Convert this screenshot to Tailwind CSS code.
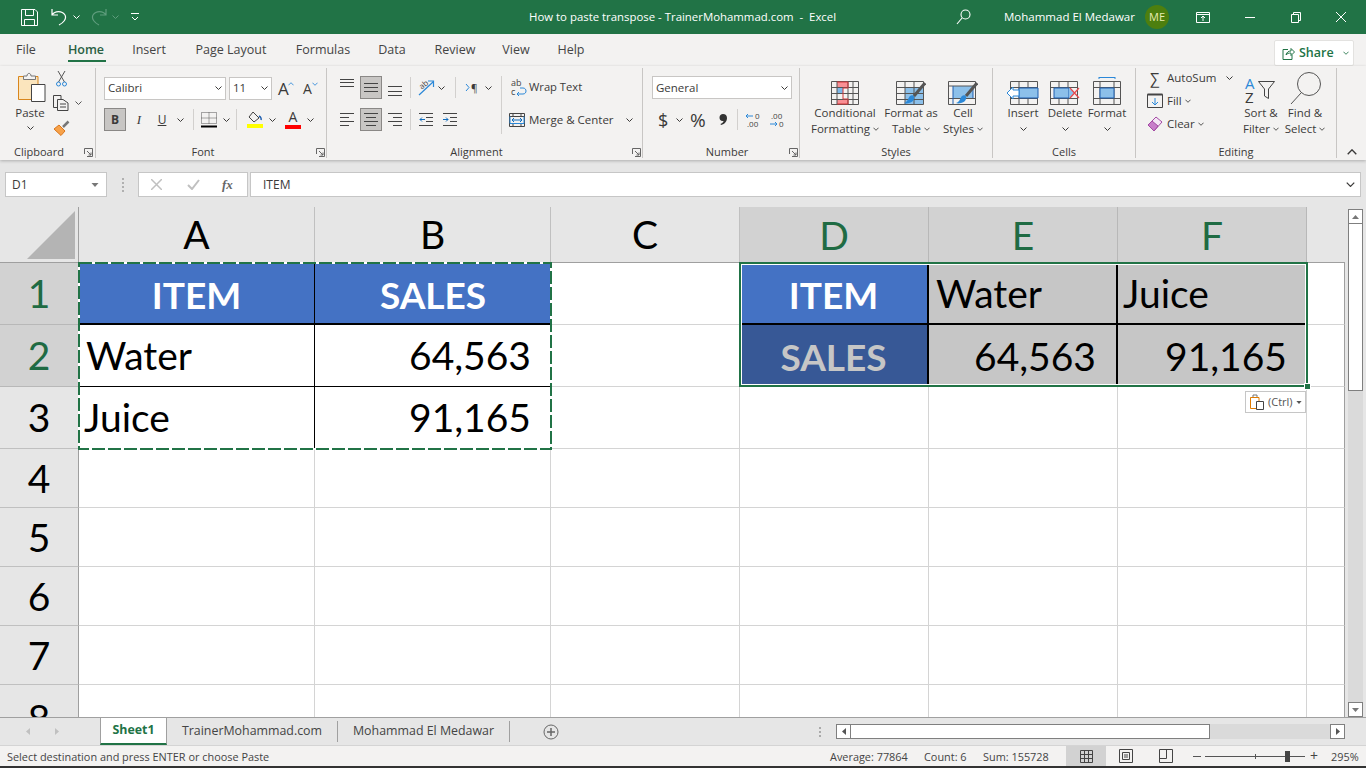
<!DOCTYPE html>
<html lang="en">
<head>
  <meta charset="UTF-8" />
  <title>How to paste transpose - TrainerMohammad.com - Excel</title>
  <script src="https://cdn.jsdelivr.net/npm/@tailwindcss/browser@4"></script>
</head>
<body class="w-[1366px] h-[768px] overflow-hidden bg-[#e6e6e6] text-[11.5px] text-[#3b3a39] [font-family:'Open_Sans',sans-serif]">
  <svg class="hidden">
    <symbol id="chev" viewBox="0 0 7 4"><path d="M.5.5 3.5 3.5 6.5.5" fill="none" stroke="currentColor"/></symbol>
    <symbol id="launcher" viewBox="0 0 9 9"><path d="M.5 6V.5H8.5V8.5H3M3 3 7 7M7 4.5V7H4.5" fill="none" stroke="#666"/></symbol>
    <symbol id="caret" viewBox="0 0 7 4"><path d="M0 0H7L3.5 4Z" fill="currentColor"/></symbol>
  </svg>

  <!-- Title bar -->
  <div class="flex items-center h-[34px] bg-[#217346] text-white">
    <svg class="ml-[21px] w-[17px] h-[17px]" viewBox="0 0 17 17" fill="none" stroke="#fff"><path d="M.5.5H14L16.5 3V16.5H.5ZM4.5.5V6.5H12.5V.5M3.5 16.5V10.5H13.5V16.5"/></svg>
    <svg class="ml-[13px] w-[16px] h-[18px]" viewBox="0 0 16 18" fill="none" stroke="#fff" stroke-width="1.2"><path d="M1 1V7H7M1 7C4 2.500 11 2.500 14 7 16 11 12 15 8 17"/></svg>
    <svg class="ml-[6px] w-[7px] h-[4px]"><use href="#chev"/></svg>
    <svg class="ml-[11px] w-[16px] h-[18px]" viewBox="0 0 16 18" fill="none" stroke="#5f9d7d" stroke-width="1.2"><path d="M15 1V7H9M15 7C12 2.500 5 2.500 2 7 0 11 4 15 8 17"/></svg>
    <svg class="ml-[5px] w-[7px] h-[4px] text-[#5f9d7d]"><use href="#chev"/></svg>
    <svg class="ml-[12px] w-[8px] h-[8px]" viewBox="0 0 8 8" fill="none" stroke="#fff"><path d="M0 .5H8M1 4 4 7 7 4"/></svg>
    <div class="ml-[390px] w-[307px] text-center whitespace-nowrap text-[11.4px]">How to paste transpose - TrainerMohammad.com &nbsp;-&nbsp; Excel</div>
    <svg class="ml-[120px] w-[15px] h-[16px]" viewBox="0 0 15 16" fill="none" stroke="#fff" stroke-width="1.1"><circle cx="9.500" cy="5.500" r="4.500"/><path d="M6 9 1 15"/></svg>
    <div class="ml-[33px] w-[132px] whitespace-nowrap text-[11.5px]">Mohammad El Medawar</div>
    <div class="ml-[9px] w-[24px] h-[24px] rounded-full bg-[#4d7f0f] flex items-center justify-center text-[11px] text-[#e8ecb0]">ME</div>
    <svg class="ml-[27px] w-[14px] h-[11px]" viewBox="0 0 14 11" fill="none" stroke="#fff"><path d="M.5.5H13.500V10.500H.5ZM.5 2.500H13.500M7 9V4.500M5 6 7 4 9 6"/></svg>
    <div class="ml-[35px] w-[10px] h-px bg-white"></div>
    <svg class="ml-[36px] w-[10px] h-[11px]" viewBox="0 0 10 11" fill="none" stroke="#fff"><path d="M.5 2.500H7.500V10.500H.5ZM2.500 2.500V.5H9.500V8.500H7.500"/></svg>
    <svg class="ml-[35px] w-[10px] h-[10px]" viewBox="0 0 10 10" fill="none" stroke="#fff"><path d="M0 0 10 10M10 0 0 10"/></svg>
  </div>

  <!-- Ribbon tabs -->
  <div class="flex h-[32px] bg-[#f3f2f1] text-[12.5px] text-[#444]">
    <div class="w-[52px] flex items-center justify-center">File</div>
    <div class="relative w-[68px] flex items-center justify-center font-semibold text-[#2a5f43]">Home<div class="absolute left-[16px] top-[26px] w-[38px] h-[2px] bg-[#217346]"></div></div>
    <div class="w-[58px] flex items-center justify-center">Insert</div>
    <div class="w-[106px] flex items-center justify-center">Page Layout</div>
    <div class="w-[78px] flex items-center justify-center">Formulas</div>
    <div class="w-[60px] flex items-center justify-center">Data</div>
    <div class="w-[66px] flex items-center justify-center">Review</div>
    <div class="w-[56px] flex items-center justify-center">View</div>
    <div class="w-[54px] flex items-center justify-center">Help</div>
    <div class="ml-[676px] mt-[6px] w-[80px] h-[26px] bg-white rounded-[2px] border border-[#e3e2e0] flex items-center text-[#217346] font-semibold">
      <svg class="ml-[7px] w-[13px] h-[13px]" viewBox="0 0 13 13" fill="none" stroke="#217346"><path d="M6 2.500H1V12.500H10V8M4 8C4.500 5 7 4 9 4V1.500L12.500 5 9 8.500V6C7 6 5 6.500 4 8Z"/></svg>
      <span class="ml-[4px]">Share</span>
      <svg class="ml-[9px] w-[6px] h-[4px]"><use href="#chev"/></svg>
    </div>
  </div>

  <!-- Ribbon -->
  <div class="relative z-10 flex h-[94px] pt-[2px] bg-[#f3f2f1] shadow-[0_1px_3px_rgba(0,0,0,0.25)]">

    <!-- Clipboard -->
    <div class="relative flex flex-col w-[96px] h-[90px] border-r border-[#c8c6c4]">
      <div class="flex h-[77px] pl-[14px]">
        <div class="flex flex-col items-center w-[32px]">
          <svg class="mt-[4px] ml-[3px] w-[28px] h-[30px] shrink-0" viewBox="0 0 28 30" fill="none"><path d="M.5 4.500H20V27.500H.5Z" fill="#fbe5bd" stroke="#d9861c"/><path d="M5.500 7.500V4H9C9 .5 13 .5 13 4H17.500V7.500Z" fill="#f3f2f1" stroke="#777"/><path d="M13.500 12.500H27V29.500H13.500Z" fill="#fff" stroke="#444"/></svg>
          <div class="mt-[3px] h-[16px] leading-[16px]">Paste</div>
          <svg class="mt-[5px] w-[7px] h-[4px]"><use href="#chev"/></svg>
        </div>
        <div class="flex flex-col ml-[7px]">
          <svg class="mt-[3px] ml-[3px] w-[11px] h-[16px]" viewBox="0 0 11 16" fill="none"><path d="M2 0 8.500 11M9 0 2.500 11" stroke="#555"/><circle cx="2.500" cy="13" r="2" stroke="#2b88d8"/><circle cx="8.500" cy="13" r="2" stroke="#2b88d8"/></svg>
          <div class="flex items-center mt-[8px]">
            <svg class="w-[16px] h-[16px]" viewBox="0 0 16 16" fill="none" stroke="#444"><path d="M4 12.500H.5V.5H8V4"/><path d="M4.500 4.500H10L15 8V15.500H4.500ZM7 9H13M7 12H13"/></svg>
            <svg class="ml-[6px] w-[7px] h-[4px] text-[#555]"><use href="#chev"/></svg>
          </div>
          <svg class="mt-[9px] w-[17px] h-[16px]" viewBox="0 0 17 16" fill="none"><path d="M10 7 15.500 1.500" stroke="#777" stroke-width="2.500"/><path d="M6 5 12 11 8 15.500 1 9Z" fill="#f7a24a" stroke="#d9761c"/></svg>
        </div>
      </div>
      <div class="h-[13px] leading-[13px] text-[11px] pl-[14px]">Clipboard</div>
      <svg class="absolute left-[84px] top-[80px] w-[9px] h-[9px]"><use href="#launcher"/></svg>
    </div>

    <!-- Font -->
    <div class="relative flex flex-col w-[231px] h-[90px] border-r border-[#c8c6c4]">
      <div class="h-[77px] pl-[8px] pt-[9px]">
        <div class="flex items-center h-[23px]">
          <div class="flex items-center justify-between w-[122px] h-[23px] px-[3px] pb-[1px] bg-white border border-[#c8c6c4] text-[11.5px]">Calibri<svg class="w-[7px] h-[4px]"><use href="#chev"/></svg></div>
          <div class="flex items-center justify-between ml-[3px] w-[43px] h-[23px] px-[3px] pb-[1px] bg-white border border-[#c8c6c4]">11<svg class="w-[7px] h-[4px]"><use href="#chev"/></svg></div>
          <div class="relative ml-[6px] w-[16px] text-[17px] leading-[20px]">A<svg class="absolute left-[10px] top-[3px] w-[6px] h-[4px] rotate-180 text-[#2b88d8]"><use href="#chev"/></svg></div>
          <div class="relative ml-[9px] w-[14px] text-[14px] leading-[20px]">A<svg class="absolute left-[9px] top-[3px] w-[6px] h-[4px] text-[#2b88d8]"><use href="#chev"/></svg></div>
        </div>
        <div class="flex items-center h-[23px] mt-[8px]">
          <div class="flex items-center justify-center w-[22px] h-[23px] bg-[#c8c6c4] border border-[#8a8886] font-bold text-[12px]">B</div>
          <div class="flex items-center justify-center ml-[2px] w-[22px] h-[23px] italic text-[13px] [font-family:'Liberation_Serif',serif]">I</div>
          <div class="flex items-center justify-center ml-[1px] w-[22px] h-[23px] underline text-[12px]">U</div>
          <svg class="ml-[4px] w-[7px] h-[4px]"><use href="#chev"/></svg>
          <div class="ml-[9px] w-px h-[21px] bg-[#d2d0ce]"></div>
          <svg class="ml-[7px] w-[16px] h-[16px]" viewBox="0 0 16 16" fill="none"><path d="M.5.5H15.500V11.500H.5ZM8 .5V11.500M.5 6H15.500" stroke="#555" stroke-dasharray="1 1"/><path d="M0 14.500H16" stroke="#000" stroke-width="2"/></svg>
          <svg class="ml-[6px] w-[7px] h-[4px]"><use href="#chev"/></svg>
          <div class="ml-[6px] w-px h-[21px] bg-[#d2d0ce]"></div>
          <svg class="ml-[10px] w-[16px] h-[17px]" viewBox="0 0 16 17" fill="none"><path d="M6 1 12 7 7 11 2 6Z" stroke="#444"/><path d="M12 5C14 6 14.500 8 14 9" stroke="#1f5fb0" stroke-width="1.500"/><path d="M0 15H16" stroke="#ffff00" stroke-width="4"/></svg>
          <svg class="ml-[6px] w-[7px] h-[4px]"><use href="#chev"/></svg>
          <div class="ml-[9px] w-[16px] flex flex-col items-center"><span class="text-[14px] leading-[14px]">A</span><span class="mt-[1px] w-[16px] h-[4px] bg-[#ff0000]"></span></div>
          <svg class="ml-[6px] w-[7px] h-[4px]"><use href="#chev"/></svg>
        </div>
      </div>
      <div class="h-[13px] leading-[13px] text-[11px] text-center pr-[16px]">Font</div>
      <svg class="absolute left-[220px] top-[80px] w-[9px] h-[9px]"><use href="#launcher"/></svg>
    </div>

    <!-- Alignment -->
    <div class="relative flex flex-col w-[316px] h-[90px] border-r border-[#c8c6c4]">
      <div class="flex h-[77px] pt-[8px]">
        <div class="w-[174px]">
          <div class="flex items-center h-[23px]">
            <svg class="ml-[13px] w-[14px] h-[23px]" viewBox="0 0 14 23" stroke="#444"><path d="M0 3.500H14M0 6.500H14M0 10.500H14" /></svg>
            <div class="flex items-center justify-center ml-[6px] w-[22px] h-[23px] bg-[#c8c6c4] border border-[#8a8886]"><svg class="w-[14px] h-[11px]" viewBox="0 0 14 11" stroke="#444"><path d="M0 1.500H14M0 5.500H14M0 9.500H14"/></svg></div>
            <svg class="ml-[6px] w-[14px] h-[23px]" viewBox="0 0 14 23" stroke="#444"><path d="M0 10.500H14M0 15.500H14M0 19.500H14"/></svg>
            <div class="ml-[8px] w-px h-[21px] bg-[#d2d0ce]"></div>
            <svg class="ml-[7px] w-[16px] h-[18px] overflow-visible" viewBox="0 0 16 18" fill="none"><path d="M1 16 15 3M10 2H15.500V8" stroke="#2b88d8" stroke-width="1.200"/><text x="1" y="9" font-size="8" fill="#444" transform="rotate(-40 5 6)">ab</text></svg>
            <svg class="ml-[4px] w-[7px] h-[4px]"><use href="#chev"/></svg>
            <div class="ml-[10px] w-px h-[21px] bg-[#d2d0ce]"></div>
            <svg class="ml-[9px] w-[5px] h-[7px]" viewBox="0 0 5 7" fill="none" stroke="#2b88d8"><path d="M1 0 4 3.500 1 7"/></svg>
            <span class="ml-[1px] w-[8px] text-[10px] leading-[14px]">¶</span>
            <svg class="ml-[6px] w-[7px] h-[4px]"><use href="#chev"/></svg>
          </div>
          <div class="flex items-center h-[23px] mt-[9px]">
            <svg class="ml-[13px] w-[14px] h-[15px]" viewBox="0 0 14 15" stroke="#444"><path d="M0 1.500H14M0 5.500H9M0 9.500H14M0 13.500H9"/></svg>
            <div class="flex items-center justify-center ml-[6px] w-[22px] h-[23px] bg-[#c8c6c4] border border-[#8a8886]"><svg class="w-[14px] h-[15px]" viewBox="0 0 14 15" stroke="#444"><path d="M0 1.500H14M2 5.500H12M0 9.500H14M2 13.500H12"/></svg></div>
            <svg class="ml-[6px] w-[14px] h-[15px]" viewBox="0 0 14 15" stroke="#444"><path d="M0 1.500H14M5 5.500H14M0 9.500H14M5 13.500H14"/></svg>
            <div class="ml-[8px] w-px h-[21px] bg-[#d2d0ce]"></div>
            <svg class="ml-[8px] w-[14px] h-[13px]" viewBox="0 0 14 13" fill="none"><path d="M0 .5H14M7 4.500H14M7 8.500H14M0 12.500H14" stroke="#444"/><path d="M6 6.500H1M3 4.500 1 6.500 3 8.500" stroke="#0f6cbd"/></svg>
            <svg class="ml-[10px] w-[14px] h-[13px]" viewBox="0 0 14 13" fill="none"><path d="M0 .5H14M7 4.500H14M7 8.500H14M0 12.500H14" stroke="#444"/><path d="M0 6.500H5M3 4.500 5 6.500 3 8.500" stroke="#0f6cbd"/></svg>
          </div>
        </div>
        <div class="w-[141px] h-[58px] border-l border-[#d2d0ce]">
          <div class="flex items-center h-[23px] mt-[0px]">
            <svg class="ml-[9px] w-[16px] h-[20px] overflow-visible" viewBox="0 0 16 20" fill="none"><text x="0" y="8" font-size="9" fill="#444">ab</text><text x="0" y="17" font-size="9" fill="#444">c</text><path d="M6 16H12C16 16 16 10 12 10H9M8 14 6 16 8 18" stroke="#2b88d8"/></svg>
            <span class="ml-[2px] whitespace-nowrap text-[11.2px]">Wrap Text</span>
          </div>
          <div class="flex items-center h-[23px] mt-[9px]">
            <svg class="ml-[7px] w-[16px] h-[14px]" viewBox="0 0 16 14" fill="none"><path d="M.5.5H15.500V13.500H.5ZM.5 3.500H15.500M.5 10.500H15.500M4 .5V3M12 .5V3M4 11V13.500M12 11V13.500" stroke="#444"/><path d="M1 3.500V10.500H15V3.500" stroke="#2b88d8"/><path d="M3 7H13M5 5 3 7 5 9M11 5 13 7 11 9" stroke="#0f6cbd"/></svg>
            <span class="ml-[4px] whitespace-nowrap">Merge &amp; Center</span>
            <svg class="ml-[12px] w-[7px] h-[4px]"><use href="#chev"/></svg>
          </div>
        </div>
      </div>
      <div class="h-[13px] leading-[13px] text-[11px] text-center pr-[16px]">Alignment</div>
      <svg class="absolute left-[305px] top-[80px] w-[9px] h-[9px]"><use href="#launcher"/></svg>
    </div>

    <!-- Number -->
    <div class="relative flex flex-col w-[157px] h-[90px] border-r border-[#c8c6c4]">
      <div class="h-[77px] pl-[9px] pt-[8px]">
        <div class="flex items-center justify-between w-[140px] h-[23px] px-[3px] bg-white border border-[#c8c6c4]">General<svg class="w-[7px] h-[4px]"><use href="#chev"/></svg></div>
        <div class="flex items-center h-[23px] mt-[9px]">
          <span class="ml-[6px] w-[10px] text-[18px] leading-[20px]">$</span>
          <svg class="ml-[8px] w-[7px] h-[4px]"><use href="#chev"/></svg>
          <span class="ml-[7px] w-[17px] text-[19px] leading-[20px] whitespace-nowrap">%</span>
          <svg class="ml-[12px] w-[8px] h-[11px]" viewBox="0 0 8 11" fill="#333"><path d="M4 0C6.500 0 8 1.500 8 4 8 7 6 10 2 11L1.500 10C3.500 9 4.500 8 4.500 7 2 7.500 .5 6 .5 3.500.5 1.500 2 0 4 0Z"/></svg>
          <div class="ml-[10px] w-px h-[21px] bg-[#d2d0ce]"></div>
          <svg class="ml-[7px] w-[16px] h-[16px] overflow-visible" viewBox="0 0 16 16" fill="none"><path d="M8 4H1M3 2 1 4 3 6" stroke="#2b88d8"/><text x="10" y="7" font-size="8" fill="#444">0</text><text x="2" y="15" font-size="8" fill="#444">.00</text></svg>
          <svg class="ml-[8px] w-[16px] h-[16px] overflow-visible" viewBox="0 0 16 16" fill="none"><text x="2" y="7" font-size="8" fill="#444">.00</text><path d="M1 12H8M6 10 8 12 6 14" stroke="#2b88d8"/><text x="10" y="15" font-size="8" fill="#444">0</text></svg>
        </div>
      </div>
      <div class="h-[13px] leading-[13px] text-[11px] text-center pl-[12px]">Number</div>
      <svg class="absolute left-[146px] top-[80px] w-[9px] h-[9px]"><use href="#launcher"/></svg>
    </div>

    <!-- Styles -->
    <div class="flex flex-col w-[193px] h-[90px] border-r border-[#c8c6c4]">
      <div class="flex h-[77px] pl-[8px] pt-[13px]">
        <div class="flex flex-col items-center w-[74px]">
          <svg class="w-[28px] h-[24px]" viewBox="0 0 28 24" fill="none"><path d="M6 1H17V7H6ZM6 18H17V23H6Z" fill="#f98f94"/><path d="M6 7H12V12H6Z" fill="#7db8e8"/><path d="M.5.5H27.500V23.500H.5ZM.5 6.500H27.500M.5 12.500H27.500M.5 18.500H27.500M6 .5V23.500M17 .5V23.500M22 .5V23.500" stroke="#555"/><path d="M6 1H17V7H12V18H17V23H6" stroke="#d13438"/></svg>
          <div class="h-[16px] leading-[16px]">Conditional</div>
          <div class="flex items-center h-[16px] leading-[16px]">Formatting<svg class="ml-[3px] w-[6px] h-[4px]"><use href="#chev"/></svg></div>
        </div>
        <div class="flex flex-col items-center w-[58px]">
          <svg class="w-[30px] h-[24px]" viewBox="0 0 30 24" fill="none"><path d="M9 7H27V23H9Z" fill="#8cc0ea"/><path d="M.5.5H27.500V23.500H.5ZM.5 6.500H27.500M.5 12.500H27.500M.5 18.500H27.500M9 .5V23.500M18 .5V23.500" stroke="#555"/><path d="M29 2 18 15" stroke="#555" stroke-width="3"/><path d="M14 15C17 13 20 16 17 20 15 22 10 23 8 22 12 21 12 17 14 15Z" fill="#2b88d8"/></svg>
          <div class="h-[16px] leading-[16px]">Format as</div>
          <div class="flex items-center h-[16px] leading-[16px]">Table<svg class="ml-[3px] w-[6px] h-[4px]"><use href="#chev"/></svg></div>
        </div>
        <div class="flex flex-col items-center w-[46px]">
          <svg class="w-[30px] h-[24px]" viewBox="0 0 30 24" fill="none"><path d="M5 5H25V17H5Z" fill="#8cc0ea"/><path d="M.5.5H27.500V23.500H.5ZM.5 5H27.500M.5 17.500H27.500" stroke="#555"/><path d="M5 5V23M25 5V17" stroke="#1f5fb0"/><path d="M29 2 18 15" stroke="#555" stroke-width="3"/><path d="M14 15C17 13 20 16 17 20 15 22 10 23 8 22 12 21 12 17 14 15Z" fill="#2b88d8"/></svg>
          <div class="h-[16px] leading-[16px]">Cell</div>
          <div class="flex items-center h-[16px] leading-[16px]">Styles<svg class="ml-[3px] w-[6px] h-[4px]"><use href="#chev"/></svg></div>
        </div>
      </div>
      <div class="h-[13px] leading-[13px] text-[11px] text-center">Styles</div>
    </div>

    <!-- Cells -->
    <div class="flex flex-col w-[143px] h-[90px] border-r border-[#c8c6c4]">
      <div class="flex h-[77px] pl-[9px] pt-[13px]">
        <div class="flex flex-col items-center w-[42px]">
          <svg class="w-[32px] h-[24px]" viewBox="0 0 32 24" fill="none"><path d="M3.500.5H30.500V23.500H3.500ZM3.500 6.500H30.500M3.500 17.500H30.500M12 .5V23.500M21 .5V23.500" stroke="#555"/><path d="M12 7H31V17H12Z" fill="#8cc0ea" stroke="#1f5fb0"/><path d="M12 9H6V6L0 12 6 18V15H12Z" fill="#fff" stroke="#2b88d8"/></svg>
          <div class="h-[16px] leading-[16px]">Insert</div>
          <svg class="mt-[6px] w-[7px] h-[4px]"><use href="#chev"/></svg>
        </div>
        <div class="flex flex-col items-center w-[42px]">
          <svg class="w-[30px] h-[24px]" viewBox="0 0 30 24" fill="none"><path d="M.5.5H27.500V23.500H.5ZM.5 6.500H27.500M.5 17.500H27.500M9 .5V23.500M18 .5V23.500" stroke="#555"/><path d="M4 7H19V17H4Z" fill="#8cc0ea" stroke="#1f5fb0"/><path d="M19 7 25 12 19 17Z" fill="#8cc0ea"/><path d="M20 7 29 17M29 7 20 17" stroke="#e8484c" stroke-width="1.200"/></svg>
          <div class="h-[16px] leading-[16px]">Delete</div>
          <svg class="mt-[6px] w-[7px] h-[4px]"><use href="#chev"/></svg>
        </div>
        <div class="flex flex-col items-center w-[42px]">
          <svg class="-mt-[4px] w-[28px] h-[28px]" viewBox="0 0 28 28" fill="none"><path d="M6 .5H22M6 0V2M22 0V2" stroke="#2b88d8"/><path d="M.5 4.500H27.500V27.500H.5ZM.5 10.500H27.500M.5 21.500H27.500M7 4.500V27.500M21 4.500V27.500" stroke="#555"/><path d="M7 11H21V21H7Z" fill="#8cc0ea" stroke="#1f5fb0"/></svg>
          <div class="h-[16px] leading-[16px]">Format</div>
          <svg class="mt-[6px] w-[7px] h-[4px]"><use href="#chev"/></svg>
        </div>
      </div>
      <div class="h-[13px] leading-[13px] text-[11px] text-center">Cells</div>
    </div>

    <!-- Editing -->
    <div class="flex flex-col w-[201px] h-[90px] border-r border-[#c8c6c4]">
      <div class="flex h-[77px] pl-[11px]">
        <div class="w-[92px]">
          <div class="flex items-center h-[20px]">
            <span class="ml-[3px] w-[13px] text-[15px] leading-[20px]">∑</span>
            <span class="ml-[4px] whitespace-nowrap">AutoSum</span>
            <svg class="ml-[10px] w-[7px] h-[4px]"><use href="#chev"/></svg>
          </div>
          <div class="flex items-center h-[20px] mt-[3px]">
            <svg class="w-[16px] h-[16px]" viewBox="0 0 16 16" fill="none"><path d="M.5 1.500H15.500V14.500H.5Z" stroke="#444"/><path d="M.5 1.500H15.500" stroke="#444" stroke-width="2"/><path d="M8 5V12M5 9 8 12 11 9" stroke="#2b88d8"/></svg>
            <span class="ml-[4px]">Fill</span>
            <svg class="ml-[3px] w-[6px] h-[4px]"><use href="#chev"/></svg>
          </div>
          <div class="flex items-center h-[20px] mt-[3px]">
            <svg class="w-[16px] h-[16px]" viewBox="0 0 16 16" fill="none"><path d="M1 9 9 1 15 6 7 15Z" fill="#f3e4f4" stroke="#a349a4"/><path d="M1 9 7 15 11 10 5 5Z" fill="#c77dc9" stroke="#a349a4"/></svg>
            <span class="ml-[4px]">Clear</span>
            <svg class="ml-[3px] w-[6px] h-[4px]"><use href="#chev"/></svg>
          </div>
        </div>
        <div class="flex flex-col items-center w-[44px] pt-[9px]">
          <div class="flex w-[32px] h-[28px]">
            <div class="flex flex-col w-[13px] text-[15px] leading-[14px] -mt-[1px]">
              <span class="text-[#2b88d8]">A</span><span>Z</span>
            </div>
            <svg class="mt-[4px] w-[17px] h-[18px]" viewBox="0 0 17 18" fill="none" stroke="#444"><path d="M.5.5H16.500L10.500 8V17.500L6.500 15V8Z"/></svg>
          </div>
          <div class="h-[16px] leading-[16px] whitespace-nowrap">Sort &amp;</div>
          <div class="flex items-center h-[16px] leading-[16px]">Filter<svg class="ml-[3px] w-[6px] h-[4px]"><use href="#chev"/></svg></div>
        </div>
        <div class="flex flex-col items-center w-[44px] pt-[4px]">
          <svg class="w-[31px] h-[33px]" viewBox="0 0 31 33" fill="none" stroke="#555"><circle cx="19" cy="12" r="11.500"/><path d="M11 21 1 32"/></svg>
          <div class="h-[16px] leading-[16px] whitespace-nowrap">Find &amp;</div>
          <div class="flex items-center h-[16px] leading-[16px]">Select<svg class="ml-[3px] w-[6px] h-[4px]"><use href="#chev"/></svg></div>
        </div>
      </div>
      <div class="h-[13px] leading-[13px] text-[11px] text-center">Editing</div>
    </div>

    <div class="flex-1 flex justify-center items-end h-[90px] pb-[3px]">
      <svg class="w-[10px] h-[6px] rotate-180"><use href="#chev"/></svg>
    </div>
  </div>

  <!-- Formula bar -->
  <div class="flex h-[47px] pt-[12px] pl-[5px] text-[12px]">
    <div class="flex items-center justify-between w-[102px] h-[25px] pl-[6px] pr-[7px] bg-white border border-[#c6c6c6]">D1<svg class="w-[8px] h-[4px] text-[#777]"><use href="#caret"/></svg></div>
    <div class="ml-[15px] flex flex-col justify-center gap-[2px] h-[25px]"><span class="w-[2px] h-[2px] bg-[#b0b0b0]"></span><span class="w-[2px] h-[2px] bg-[#b0b0b0]"></span><span class="w-[2px] h-[2px] bg-[#b0b0b0]"></span><span class="w-[2px] h-[2px] bg-[#b0b0b0]"></span></div>
    <div class="ml-[14px] flex items-center w-[110px] h-[25px] bg-white border border-[#c6c6c6]">
      <svg class="ml-[12px] w-[11px] h-[11px]" viewBox="0 0 11 11" stroke="#c0c0c0" stroke-width="1.500"><path d="M0 0 11 11M11 0 0 11"/></svg>
      <svg class="ml-[25px] w-[13px] h-[11px]" viewBox="0 0 13 11" fill="none" stroke="#c0c0c0" stroke-width="2"><path d="M1 6 5 10 12 1"/></svg>
      <span class="ml-[22px] italic text-[#666] text-[13px] font-bold [font-family:'Liberation_Serif',serif]">fx</span>
    </div>
    <div class="ml-[2px] flex items-center justify-between w-[1111px] h-[25px] pl-[12px] pr-[5px] bg-white border border-[#c6c6c6]">ITEM<svg class="w-[9px] h-[5px]"><use href="#chev"/></svg></div>
  </div>

  <!-- Sheet -->
  <div class="flex h-[510px]">
    <div class="relative w-[1345px] h-[510px] overflow-hidden bg-white text-black text-[39px] [font-family:Lato,sans-serif]">
      <div class="grid grid-cols-[79px_236px_236px_189px_189px_189px_189px_38px] grid-rows-[56px_62px_62px_62px_59px_59px_59px_59px_32px]">
        <!-- header row -->
        <div class="flex items-center justify-end pr-[3px] bg-[#e6e6e6] border-r border-b border-[#9f9f9f]">
          <svg class="w-[48px] h-[48px]" viewBox="0 0 48 48"><path d="M48 0V48H0Z" fill="#b4b4b4"/></svg>
        </div>
        <div class="flex items-center justify-center bg-[#e6e6e6] border-r border-b border-r-[#c0c0c0] border-b-[#9f9f9f]">A</div>
        <div class="flex items-center justify-center bg-[#e6e6e6] border-r border-b border-r-[#c0c0c0] border-b-[#9f9f9f]">B</div>
        <div class="flex items-center justify-center bg-[#e6e6e6] border-r border-b border-r-[#c0c0c0] border-b-[#9f9f9f]">C</div>
        <div class="flex items-center justify-center bg-[#d2d2d2] text-[#1f6b43] border-r border-r-[#b8b8b8]">D</div>
        <div class="flex items-center justify-center bg-[#d2d2d2] text-[#1f6b43] border-r border-r-[#b8b8b8]">E</div>
        <div class="flex items-center justify-center bg-[#d2d2d2] text-[#1f6b43] border-r border-r-[#b8b8b8]">F</div>
        <div class="bg-[#e6e6e6] border-b border-[#9f9f9f]"></div>

        <!-- row 1 -->
        <div class="flex items-center justify-center bg-[#d2d2d2] text-[#1f6b43] border-r border-b border-r-[#9f9f9f] border-b-[#b8b8b8]">1</div>
        <div class="flex items-center justify-center pt-[3px] bg-[#4472c4] text-white text-[37px] font-bold border-r border-b-2 border-black">ITEM</div>
        <div class="flex items-center justify-center pt-[3px] bg-[#4472c4] text-white text-[37px] font-bold border-b-2 border-black">SALES</div>
        <div class="border-r border-b border-[#d4d4d4]"></div>
        <div class="flex items-center justify-center pt-[3px] bg-[#4472c4] text-white text-[37px] font-bold border-r-2 border-b-2 border-black">ITEM</div>
        <div class="flex items-center pl-[7px] bg-[#c6c6c6] border-r-2 border-b-2 border-black">Water</div>
        <div class="flex items-center pl-[5px] bg-[#c6c6c6] border-b-2 border-black">Juice</div>
        <div class="border-r border-b border-r-[#9f9f9f] border-b-[#d4d4d4]"></div>

        <!-- row 2 -->
        <div class="flex items-center justify-center bg-[#d2d2d2] text-[#1f6b43] border-r border-b border-r-[#9f9f9f] border-b-[#b8b8b8]">2</div>
        <div class="flex items-center pl-[7px] border-r border-b border-black">Water</div>
        <div class="flex items-center justify-end pr-[20px] border-b border-black">64,563</div>
        <div class="border-r border-b border-[#d4d4d4]"></div>
        <div class="flex items-center justify-center pt-[2px] bg-[#375896] text-[#c6c6c6] text-[37px] font-bold border-r-2 border-black">SALES</div>
        <div class="flex items-center justify-end pr-[20px] bg-[#c6c6c6] border-r-2 border-black">64,563</div>
        <div class="flex items-center justify-end pr-[20px] bg-[#c6c6c6]">91,165</div>
        <div class="border-r border-b border-r-[#9f9f9f] border-b-[#d4d4d4]"></div>

        <!-- row 3 -->
        <div class="flex items-center justify-center bg-[#e6e6e6] border-r border-b border-r-[#9f9f9f] border-b-[#c0c0c0]">3</div>
        <div class="flex items-center pl-[5px] border-r border-b border-r-black border-b-[#d4d4d4]">Juice</div>
        <div class="flex items-center justify-end pr-[20px] border-b border-[#d4d4d4]">91,165</div>
        <div class="border-r border-b border-[#d4d4d4]"></div>
        <div class="border-r border-b border-[#d4d4d4]"></div>
        <div class="border-r border-b border-[#d4d4d4]"></div>
        <div class="border-r border-b border-[#d4d4d4]"></div>
        <div class="border-r border-b border-r-[#9f9f9f] border-b-[#d4d4d4]"></div>

        <!-- row 4 -->
        <div class="flex items-center justify-center bg-[#e6e6e6] border-r border-b border-r-[#9f9f9f] border-b-[#c0c0c0]">4</div>
        <div class="border-r border-b border-[#d4d4d4]"></div>
        <div class="border-r border-b border-[#d4d4d4]"></div>
        <div class="border-r border-b border-[#d4d4d4]"></div>
        <div class="border-r border-b border-[#d4d4d4]"></div>
        <div class="border-r border-b border-[#d4d4d4]"></div>
        <div class="border-r border-b border-[#d4d4d4]"></div>
        <div class="border-r border-b border-r-[#9f9f9f] border-b-[#d4d4d4]"></div>

        <!-- row 5 -->
        <div class="flex items-center justify-center bg-[#e6e6e6] border-r border-b border-r-[#9f9f9f] border-b-[#c0c0c0]">5</div>
        <div class="border-r border-b border-[#d4d4d4]"></div>
        <div class="border-r border-b border-[#d4d4d4]"></div>
        <div class="border-r border-b border-[#d4d4d4]"></div>
        <div class="border-r border-b border-[#d4d4d4]"></div>
        <div class="border-r border-b border-[#d4d4d4]"></div>
        <div class="border-r border-b border-[#d4d4d4]"></div>
        <div class="border-r border-b border-r-[#9f9f9f] border-b-[#d4d4d4]"></div>

        <!-- row 6 -->
        <div class="flex items-center justify-center bg-[#e6e6e6] border-r border-b border-r-[#9f9f9f] border-b-[#c0c0c0]">6</div>
        <div class="border-r border-b border-[#d4d4d4]"></div>
        <div class="border-r border-b border-[#d4d4d4]"></div>
        <div class="border-r border-b border-[#d4d4d4]"></div>
        <div class="border-r border-b border-[#d4d4d4]"></div>
        <div class="border-r border-b border-[#d4d4d4]"></div>
        <div class="border-r border-b border-[#d4d4d4]"></div>
        <div class="border-r border-b border-r-[#9f9f9f] border-b-[#d4d4d4]"></div>

        <!-- row 7 -->
        <div class="flex items-center justify-center bg-[#e6e6e6] border-r border-b border-r-[#9f9f9f] border-b-[#c0c0c0]">7</div>
        <div class="border-r border-b border-[#d4d4d4]"></div>
        <div class="border-r border-b border-[#d4d4d4]"></div>
        <div class="border-r border-b border-[#d4d4d4]"></div>
        <div class="border-r border-b border-[#d4d4d4]"></div>
        <div class="border-r border-b border-[#d4d4d4]"></div>
        <div class="border-r border-b border-[#d4d4d4]"></div>
        <div class="border-r border-b border-r-[#9f9f9f] border-b-[#d4d4d4]"></div>

        <!-- row 8, cut off by the tab strip -->
        <div class="flex justify-center bg-[#e6e6e6] border-r border-[#9f9f9f] pt-[4px]">8</div>
        <div class="border-r border-[#d4d4d4]"></div>
        <div class="border-r border-[#d4d4d4]"></div>
        <div class="border-r border-[#d4d4d4]"></div>
        <div class="border-r border-[#d4d4d4]"></div>
        <div class="border-r border-[#d4d4d4]"></div>
        <div class="border-r border-[#d4d4d4]"></div>
        <div class="border-r border-[#9f9f9f]"></div>
      </div>

      <!-- marching ants around the copied range -->
      <svg class="absolute left-[77px] top-[54px] w-[476px] h-[190px]" viewBox="0 0 476 190" fill="none">
        <rect x="2" y="2" width="472" height="186" stroke="#ffffff" stroke-width="2"/>
        <rect x="2" y="2" width="472" height="186" stroke="#217346" stroke-width="2" stroke-dasharray="13 3"/>
      </svg>

      <!-- selection D1:F2 -->
      <div class="absolute left-[739px] top-[55px] w-[569px] h-[125px] border-2 border-[#217346] shadow-[inset_0_0_0_1px_#fff]"></div>
      <div class="absolute left-[1304px] top-[176px] w-[7px] h-[7px] bg-[#217346] border border-white"></div>

      <!-- paste options -->
      <div class="absolute left-[1245px] top-[184px] flex items-center w-[61px] h-[22px] pl-[4px] bg-white border border-[#c6c6c6] text-[11px] text-[#555] [font-family:'Open_Sans',sans-serif]">
        <svg class="w-[14px] h-[16px]" viewBox="0 0 14 16" fill="none"><path d="M.5 3.500H9V14.500H.5Z" stroke="#e07b00"/><path d="M3 3V1H7V3" stroke="#777"/><path d="M6.500 7.500H13.500V15.500H6.500Z" fill="#fff" stroke="#444"/></svg>
        <span class="ml-[4px] whitespace-nowrap">(Ctrl)</span>
        <svg class="ml-[3px] w-[6px] h-[3px]"><use href="#caret"/></svg>
      </div>
    </div>

    <!-- Vertical scrollbar -->
    <div class="w-[21px] h-[510px] pt-[2px] pl-[3px]">
      <div class="flex flex-col w-[15px] h-[508px] bg-[#dadada]">
        <div class="flex items-center justify-center h-[15px] bg-white border border-[#7f7f7f] text-[#777]"><svg class="w-[7px] h-[4px] rotate-180"><use href="#caret"/></svg></div>
        <div class="h-[167px] bg-white border border-t-0 border-[#7f7f7f]"></div>
        <div class="flex-1"></div>
        <div class="flex items-center justify-center h-[15px] bg-white border border-[#7f7f7f] text-[#777]"><svg class="w-[7px] h-[4px]"><use href="#caret"/></svg></div>
      </div>
    </div>
  </div>

  <!-- Sheet tabs -->
  <div class="flex items-center h-[28px] bg-[#e6e6e6] border-t border-[#a0a0a0] text-[12.4px] text-[#444]">
    <svg class="ml-[26px] w-[4px] h-[7px]" viewBox="0 0 4 7" fill="#c0c0c0"><path d="M4 0V7L0 3.500Z"/></svg>
    <svg class="ml-[25px] w-[4px] h-[7px]" viewBox="0 0 4 7" fill="#c0c0c0"><path d="M0 0V7L4 3.500Z"/></svg>
    <div class="ml-[41px] flex items-center justify-center w-[67px] h-[27px] bg-white border-x border-b-2 border-x-[#a0a0a0] border-b-[#217346] font-bold text-[#217346]">Sheet1</div>
    <div class="flex items-center justify-center w-[171px] h-[21px] border-r border-[#a0a0a0]">TrainerMohammad.com</div>
    <div class="flex items-center justify-center w-[172px] h-[21px] border-r border-[#a0a0a0] whitespace-nowrap">Mohammad El Medawar</div>
    <svg class="ml-[33px] w-[16px] h-[16px]" viewBox="0 0 16 16" fill="none" stroke="#666"><circle cx="8" cy="8" r="7"/><path d="M8 4V12M4 8H12" stroke-width="1.500"/></svg>
    <div class="ml-[260px] flex flex-col gap-[2px]"><span class="w-[2px] h-[2px] bg-[#aaa]"></span><span class="w-[2px] h-[2px] bg-[#aaa]"></span><span class="w-[2px] h-[2px] bg-[#aaa]"></span></div>
    <div class="ml-[15px] flex w-[509px] h-[15px] bg-[#dadada]">
      <div class="flex items-center justify-center w-[15px] bg-white border border-[#7f7f7f]"><svg class="w-[4px] h-[7px] text-[#555]" viewBox="0 0 4 7" fill="currentColor"><path d="M4 0V7L0 3.500Z"/></svg></div>
      <div class="w-[359px] bg-white border border-l-0 border-[#7f7f7f]"></div>
      <div class="flex-1"></div>
      <div class="flex items-center justify-center w-[15px] bg-white border border-[#7f7f7f]"><svg class="w-[4px] h-[7px] text-[#555]" viewBox="0 0 4 7" fill="currentColor"><path d="M0 0V7L4 3.500Z"/></svg></div>
    </div>
  </div>

  <!-- Status bar -->
  <div class="flex items-center h-[21px] bg-[#f3f2f1] border-t border-[#d4d4d4] text-[10.9px] text-[#444]">
    <div class="ml-[7px] w-[823px] pt-[2px] whitespace-nowrap">Select destination and press ENTER or choose Paste</div>
    <div class="w-[94px] pt-[2px] whitespace-nowrap">Average: 77864</div>
    <div class="w-[59px] pt-[2px] whitespace-nowrap">Count: 6</div>
    <div class="w-[83px] pt-[2px] whitespace-nowrap">Sum: 155728</div>
    <div class="flex items-center justify-center w-[40px] h-[20px] bg-[#d2d2d2]">
      <svg class="w-[13px] h-[13px]" viewBox="0 0 13 13" fill="none" stroke="#444"><path d="M.5.5H12.500V12.500H.5ZM4.500.5V12.500M8.500.5V12.500M.5 4.500H12.500M.5 8.500H12.500"/></svg>
    </div>
    <svg class="ml-[13px] w-[14px] h-[14px]" viewBox="0 0 14 14" fill="none" stroke="#444"><path d="M.5.5H13.500V13.500H.5ZM3.500 3.500H10.500V10.500H3.500ZM5 6H9M5 8H9"/></svg>
    <svg class="ml-[26px] w-[14px] h-[14px]" viewBox="0 0 14 14" fill="none" stroke="#444"><path d="M.5.5H13.500V13.500H.5ZM.5 9.500H7.500V.5"/></svg>
    <div class="ml-[20px] w-[8px] h-px bg-[#555]"></div>
    <div class="relative ml-[4px] w-[100px] h-px bg-[#555]">
      <div class="absolute left-[50px] -top-[2px] w-px h-[5px] bg-[#555]"></div>
      <div class="absolute left-[80px] -top-[5px] w-[5px] h-[11px] bg-[#444]"></div>
    </div>
    <div class="ml-[5px] text-[14px] leading-[14px] w-[8px]">+</div>
    <div class="ml-[13px] pt-[2px] whitespace-nowrap">295%</div>
  </div>
  <div class="h-[2px] bg-[#333]"></div>
</body>
</html>
